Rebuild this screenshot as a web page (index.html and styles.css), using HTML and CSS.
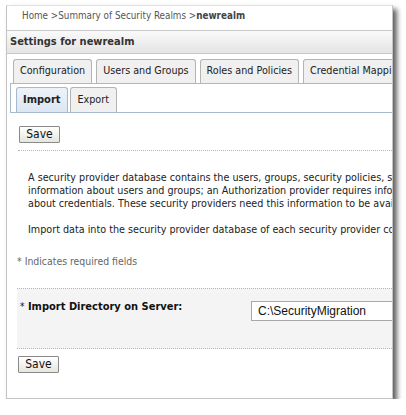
FILE: index.html
```html
<!DOCTYPE html>
<html>
<head>
<meta charset="utf-8">
<link rel="stylesheet" href="styles.css">
</head>
<body>
<div class="panel">
  <div class="crumbs">Home &gt;Summary of Security Realms &gt;<b>newrealm</b></div>
  <div class="title">Settings for newrealm</div>
  <div class="tabs">
    <div class="tab">Configuration</div>
    <div class="tab">Users and Groups</div>
    <div class="tab">Roles and Policies</div>
    <div class="tab">Credential Mappings</div>
  </div>
  <div class="subtabs">
    <div class="subtab active">Import</div>
    <div class="subtab">Export</div>
  </div>
  <div class="content">
    <div class="bar top"><button class="btn">Save</button></div>
    <div class="desc">
      <p>A security provider database contains the users, groups, security policies, security roles, and credentials used by some types of security providers to provide security services.<br>information about users and groups; an Authorization provider requires information about security policies; a Role Mapping provider requires information about security roles<br>about credentials. These security providers need this information to be available in a database in order to function properly.</p>
      <p>Import data into the security provider database of each security provider configured in this security realm.</p>
    </div>
    <div class="req">* Indicates required fields</div>
    <div class="row">
      <div class="label"><span class="star">*</span> Import Directory on Server:</div>
      <div class="field"><span class="input">C:\SecurityMigration</span></div>
    </div>
    <div class="bar"><button class="btn">Save</button></div>
  </div>
</div>
</body>
</html>
```

FILE: styles.css
```css
html, body {
  margin: 0;
  padding: 0;
  background: #ffffff;
}
body {
  padding: 5px 0 0 6px;
  font-family: "DejaVu Sans Condensed", "DejaVu Sans", sans-serif;
  font-size: 10.7px;
  color: #222;
}
.panel {
  width: 385px;
  height: 392px;
  border: 1px solid #c4c4c4;
  border-top-color: #e0e0e0;
  background: #fff;
  box-shadow: 4px 4px 5px rgba(0, 0, 0, 0.62);
  overflow: hidden;
  display: flex;
  flex-direction: column;
  white-space: nowrap;
}
.crumbs {
  height: 24px;
  line-height: 20px;
  padding-left: 15px;
  font-size: 9.8px;
  color: #555;
}
.crumbs b {
  color: #444;
}
.title {
  height: 22px;
  line-height: 22px;
  border-top: 1px solid #c8c8c8;
  border-bottom: 1px solid #c8c8c8;
  background: linear-gradient(#fafafa, #e4e4e4);
  padding-left: 3px;
  font-size: 11px;
  font-weight: bold;
  color: #333;
}
.tabs {
  display: flex;
  gap: 4px;
  margin-top: 5px;
  padding-left: 6px;
  height: 24px;
}
.tab {
  box-sizing: border-box;
  height: 24px;
  padding: 0 6px;
  line-height: 22px;
  background: #f0f0f0;
  border: 1px solid #b4b4b4;
  border-bottom: none;
  border-radius: 3px 3px 0 0;
  color: #222;
}
.subtabs {
  display: flex;
  gap: 2px;
  margin-left: 3px;
  height: 30px;
  box-sizing: border-box;
  border-top: 1px solid #a7b9cc;
  border-left: 1px solid #a7b9cc;
  border-bottom: 1px solid #a7b9cc;
  padding: 3px 0 0 5px;
  align-items: flex-end;
}
.subtab {
  box-sizing: border-box;
  height: 25px;
  line-height: 24px;
  padding: 0 7px;
  background: #f0f0f0;
  border: 1px solid #b4b4b4;
  border-bottom: none;
  border-radius: 3px 3px 0 0;
}
.subtab.active {
  background: linear-gradient(#eef3f9, #dce7f3);
  border-color: #a7b9cc;
  font-weight: bold;
  font-size: 11px;
  padding: 0 6px;
}
.content {
  padding: 0 0 0 10px;
  display: flex;
  flex-direction: column;
}
.bar {
  padding-top: 7px;
}
.bar.top {
  padding-top: 13px;
  padding-bottom: 7px;
  border-bottom: 1px dotted #b8b8b8;
  margin-left: 1px;
}
.btn {
  display: block;
  margin: 0;
  width: 41px;
  height: 17px;
  padding: 0;
  border: 1px solid #8a8a8a;
  border-radius: 1px;
  background: linear-gradient(#ffffff, #e6e6de);
  font-family: "DejaVu Sans Condensed", "DejaVu Sans", sans-serif;
  font-size: 12px;
  line-height: 15px;
  color: #111;
  margin-left: 1px;
}
.desc {
  padding: 20px 0 0 11px;
  line-height: 13px;
}
.desc p {
  margin: 0 0 13px 0;
}
.req {
  margin-top: 6px;
  font-size: 10.4px;
  color: #666;
  line-height: 13px;
}
.row {
  margin-top: 20px;
  height: 48px;
  background: #f4f4f4;
  border-top: 1px dotted #b8b8b8;
  border-bottom: 1px dotted #b8b8b8;
  display: flex;
  padding-top: 11px;
}
.label {
  flex: none;
  width: 231px;
  padding-left: 3px;
  font-size: 11px;
  font-weight: bold;
  color: #111;
  line-height: 13px;
}
.star {
  font-weight: normal;
  font-size: 10px;
}
.field {
  flex: none;
}
.input {
  display: block;
  box-sizing: border-box;
  width: 200px;
  height: 20px;
  margin-top: 1px;
  border: 1px solid #a8a8a8;
  background: #fff;
  padding-left: 6px;
  font-family: "Liberation Sans", Arial, sans-serif;
  font-size: 12px;
  line-height: 18px;
  color: #111;
}
```
